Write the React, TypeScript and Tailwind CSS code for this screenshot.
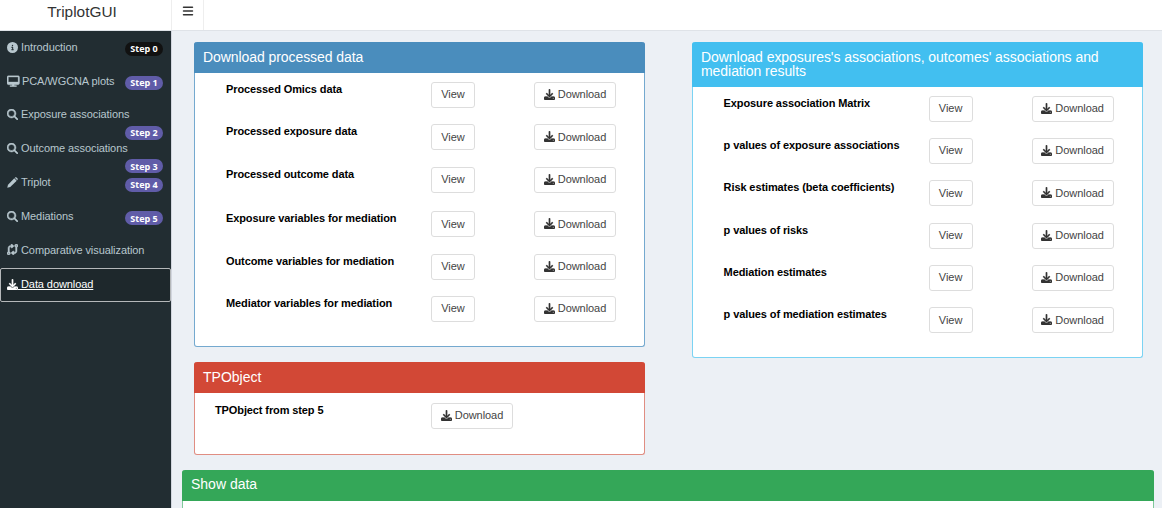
import type { ReactNode } from "react";
import {
  FaBars,
  FaCircleInfo,
  FaCodeCompare,
  FaDesktop,
  FaDownload,
  FaMagnifyingGlass,
} from "react-icons/fa6";

type MenuItem = {
  icon: ReactNode;
  label: string;
  gap: string;
  badge?: string;
  badgeClass?: string;
};

function SearchIcon() {
  return <FaMagnifyingGlass size={11} stroke="currentColor" strokeWidth={22} />;
}

function PencilIcon() {
  return (
    <svg viewBox="0 0 22 22" className="size-[11px] shrink-0 fill-current">
      <path d="M0.500 21.500 2 15.500 14.600 2.600 19.400 7.400 6.500 20z" />
      <path d="M15.600 1.600 16.800 0.600q1.200-.8 2.400.3l1.900 1.900q1 1.200.2 2.400L20.400 6.400z" />
    </svg>
  );
}

const menu: MenuItem[] = [
  { icon: <FaCircleInfo size={11} />, label: "Introduction", gap: "ml-[3px]", badge: "Step 0", badgeClass: "top-[11px] bg-[#111111]" },
  { icon: <FaDesktop size={12.5} stroke="currentColor" strokeWidth={14} />, label: "PCA/WGCNA plots", gap: "ml-[2.5px]", badge: "Step 1", badgeClass: "top-[11px] bg-[#605ca8]" },
  { icon: <SearchIcon />, label: "Exposure associations", gap: "ml-[3px]", badge: "Step 2", badgeClass: "top-[27px] bg-[#605ca8]" },
  { icon: <SearchIcon />, label: "Outcome associations", gap: "ml-[3px]", badge: "Step 3", badgeClass: "top-[27px] bg-[#605ca8]" },
  { icon: <PencilIcon />, label: "Triplot", gap: "ml-[3px]", badge: "Step 4", badgeClass: "top-[11.5px] bg-[#605ca8]" },
  { icon: <SearchIcon />, label: "Mediations", gap: "ml-[3px]", badge: "Step 5", badgeClass: "top-[11.5px] bg-[#605ca8]" },
  { icon: <FaCodeCompare size={11} stroke="currentColor" strokeWidth={20} />, label: "Comparative visualization", gap: "ml-[3px]" },
];

const processed = [
  "Processed Omics data",
  "Processed exposure data",
  "Processed outcome data",
  "Exposure variables for mediation",
  "Outcome variables for mediation",
  "Mediator variables for mediation",
];

const results = [
  "Exposure association Matrix",
  "p values of exposure associations",
  "Risk estimates (beta coefficients)",
  "p values of risks",
  "Mediation estimates",
  "p values of mediation estimates",
];

function ViewButton() {
  return (
    <button className="flex h-[26px] w-11 items-center justify-center rounded-[3px] border border-[#dddddd] bg-white pb-px text-[11px] tracking-[-0.05px] text-[#444444]">
      View
    </button>
  );
}

function DownloadButton() {
  return (
    <button className="flex h-[26px] w-[82px] items-center justify-center gap-[3px] rounded-[3px] border border-[#dddddd] bg-white pb-px text-[11px] tracking-[-0.05px] text-[#444444]">
      <FaDownload size={11} stroke="currentColor" strokeWidth={14} className="shrink-0 text-[#333333]" />
      Download
    </button>
  );
}

function DataRow({ label, spaced }: { label: string; spaced?: boolean }) {
  return (
    <div className={spaced ? "flex h-[44.7px] items-start" : "flex h-[42.3px] items-start"}>
      <div className="w-[205px] shrink-0 whitespace-nowrap text-[11px] leading-[15px] font-bold tracking-[-0.1px] text-black">
        {label}
      </div>
      <div className="w-[103px] shrink-0">
        <ViewButton />
      </div>
      <DownloadButton />
    </div>
  );
}

export default function App() {
  return (
    <div className="flex h-[508px] w-[1162px] flex-col overflow-hidden bg-[#ecf0f5] font-['Liberation_Sans',Arial,sans-serif]">
      <header className="flex h-[31px] shrink-0 border-b border-[#dfe3e8] bg-white">
        <div className="flex w-[172px] justify-center border-r border-[#eeeeee] pr-[7px] text-[15.4px] leading-[23px] text-[#333333]">
          TriplotGUI
        </div>
        <div className="flex w-8 justify-center border-r border-[#eeeeee] pt-[5px] text-[#333333]">
          <FaBars size={12} />
        </div>
      </header>

      <div className="flex min-h-0 flex-1">
        <nav className="w-[172px] shrink-0 border-r border-[#d2d6de] bg-[#222d32] text-[11px] tracking-[-0.08px] text-[#b8c7ce]">
          {menu.map((item) => (
            <div key={item.label} className="relative flex h-[33.8px] items-center whitespace-nowrap pb-[1.5px] pl-[7px]">
              {item.icon}
              <span className={item.gap}>{item.label}</span>
              {item.badge && (
                <span
                  className={`absolute left-[125px] flex h-[14px] w-[38px] items-center justify-center rounded-full font-['Open_Sans',sans-serif] text-[9px] font-bold tracking-normal text-white ${item.badgeClass}`}
                >
                  {item.badge}
                </span>
              )}
            </div>
          ))}
          <div className="flex h-[34px] items-center rounded-[2px] border border-[#b5b8ba] bg-[#1e282c] pl-[6px] text-white underline">
            <FaDownload size={11} stroke="currentColor" strokeWidth={14} />
            <span className="whitespace-pre"> Data download</span>
          </div>
        </nav>

        <main className="flex min-w-0 flex-1 flex-col pt-[11px]">
          <div className="flex h-[428px] shrink-0 items-start gap-[46.6px] pl-[22px]">
            <div className="flex w-[451.4px] flex-col gap-[15px]">
              <section className="h-[305px] rounded-[3px] border border-t-0 border-[#74a9cf] bg-white">
                <h3 className="-mx-px h-[31px] rounded-t-[3px] bg-[#4a8dbd] pl-[9px] pt-[7.5px] text-[14px] leading-[15px] tracking-[-0.07px] text-white">
                  Download processed data
                </h3>
                <div className="pl-[31px] pt-[9px]">
                  {processed.map((label, i) => (
                    <DataRow key={label} label={label} spaced={i === 2} />
                  ))}
                </div>
              </section>

              <section className="h-[93px] rounded-[3px] border border-t-0 border-[#e08d82] bg-white">
                <h3 className="-mx-px h-[31px] rounded-t-[3px] bg-[#d24836] pl-[9px] pt-[7.5px] text-[14px] leading-[15px] text-white">
                  TPObject
                </h3>
                <div className="flex items-start pl-5 pt-[10px]">
                  <div className="w-[216px] text-[11px] leading-[15px] font-bold tracking-[-0.11px] text-black">TPObject from step 5</div>
                  <DownloadButton />
                </div>
              </section>
            </div>

            <section className="h-[316px] w-[451px] rounded-[3px] border border-t-0 border-[#7bd3f3] bg-white">
              <h3 className="-mx-px h-[45px] rounded-t-[3px] bg-[#42bff0] pl-[9px] pt-2 text-[14px] leading-[14px] tracking-[-0.05px] text-white">
                Download exposures's associations, outcomes' associations and
                <br />
                mediation results
              </h3>
              <div className="pl-[30.6px] pt-[8.8px]">
                {results.map((label) => (
                  <DataRow key={label} label={label} />
                ))}
              </div>
            </section>
          </div>

          <section className="ml-[10px] mr-2 h-[100px] shrink-0 rounded-t-[3px] border border-t-0 border-[#80c99b] bg-white">
            <h3 className="-mx-px h-[31px] rounded-t-[3px] bg-[#34a758] pl-[9px] pt-[7px] text-[14px] leading-[15px] text-white">Show data</h3>
          </section>
        </main>
      </div>
    </div>
  );
}
